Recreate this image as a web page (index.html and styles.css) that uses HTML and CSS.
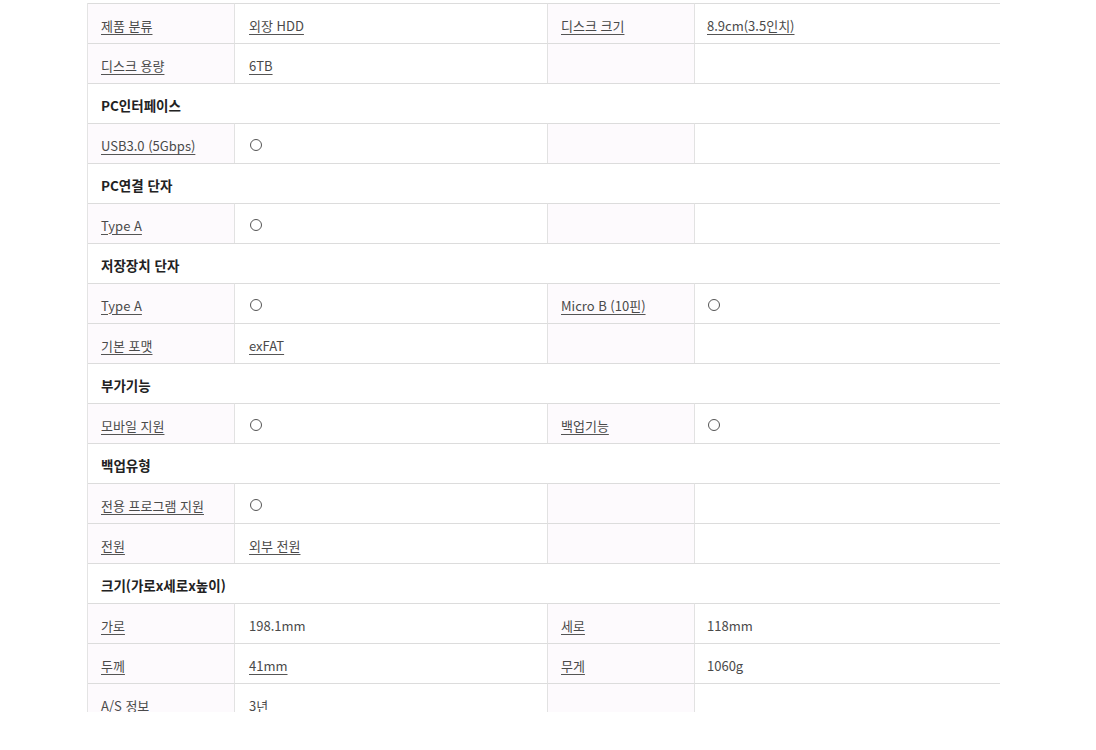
FILE: index.html
```html
<!DOCTYPE html>
<html lang="ko">
<head>
<meta charset="utf-8">
<link rel="stylesheet" href="styles.css">
</head>
<body>
<div class="sheet">
  <div class="spec">
    <div class="c lab"><u>제품 분류</u></div><div class="c val"><u>외장 HDD</u></div><div class="c lab lab2"><u>디스크 크기</u></div><div class="c val val2"><u>8.9cm(3.5인치)</u></div>
    <div class="c lab"><u>디스크 용량</u></div><div class="c val"><u>6TB</u></div><div class="c lab lab2"></div><div class="c val val2"></div>
    <div class="c sec">PC인터페이스</div>
    <div class="c lab"><u>USB3.0 (5Gbps)</u></div><div class="c val"><span class="dot"></span></div><div class="c lab lab2"></div><div class="c val val2"></div>
    <div class="c sec">PC연결 단자</div>
    <div class="c lab"><u>Type A</u></div><div class="c val"><span class="dot"></span></div><div class="c lab lab2"></div><div class="c val val2"></div>
    <div class="c sec">저장장치 단자</div>
    <div class="c lab"><u>Type A</u></div><div class="c val"><span class="dot"></span></div><div class="c lab lab2"><u>Micro B (10핀)</u></div><div class="c val val2"><span class="dot"></span></div>
    <div class="c lab"><u>기본 포맷</u></div><div class="c val"><u>exFAT</u></div><div class="c lab lab2"></div><div class="c val val2"></div>
    <div class="c sec">부가기능</div>
    <div class="c lab"><u>모바일 지원</u></div><div class="c val"><span class="dot"></span></div><div class="c lab lab2"><u>백업기능</u></div><div class="c val val2"><span class="dot"></span></div>
    <div class="c sec">백업유형</div>
    <div class="c lab"><u>전용 프로그램 지원</u></div><div class="c val"><span class="dot"></span></div><div class="c lab lab2"></div><div class="c val val2"></div>
    <div class="c lab"><u>전원</u></div><div class="c val"><u>외부 전원</u></div><div class="c lab lab2"></div><div class="c val val2"></div>
    <div class="c sec">크기(가로x세로x높이)</div>
    <div class="c lab"><u>가로</u></div><div class="c val">198.1mm</div><div class="c lab lab2"><u>세로</u></div><div class="c val val2">118mm</div>
    <div class="c lab"><u>두께</u></div><div class="c val"><u>41mm</u></div><div class="c lab lab2"><u>무게</u></div><div class="c val val2">1060g</div>
    <div class="c lab">A/S 정보</div><div class="c val">3년</div><div class="c lab lab2"></div><div class="c val val2"></div>
  </div>
</div>
</body>
</html>
```

FILE: styles.css
```css
html, body {
  margin: 0;
  padding: 0;
  background: #ffffff;
}
body {
  font-family: "Noto Sans CJK KR", "Noto Sans", sans-serif;
  font-size: 13px;
  color: #4a4a4a;
}
.sheet {
  margin: 3px 0 0 87px;
  width: 913px;
  height: 709px;
  overflow: hidden;
  border-left: 1px solid #e4e4e4;
  box-sizing: border-box;
}
.spec {
  display: grid;
  grid-template-columns: 146px 313px 147px 306px;
  grid-auto-rows: 40px;
}
.c {
  box-sizing: border-box;
  border-top: 1px solid #dcdcdc;
  display: flex;
  align-items: center;
  padding: 3px 0 0 13px;
  white-space: nowrap;
}
.c u {
  text-decoration-color: #555;
  text-underline-offset: 3px;
}
.lab {
  background: #fdfafd;
}
.lab2 {
  border-left: 1px solid #e2e2e2;
}
.val {
  background: #fff;
  border-left: 1px solid #e2e2e2;
  padding-left: 14px;
}
.val2 {
  padding-left: 12px;
}
.sec {
  grid-column: 1 / -1;
  background: #fff;
  font-weight: 700;
  font-size: 13.5px;
  color: #222;
  padding-top: 2px;
}
.dot {
  display: inline-block;
  width: 10px;
  height: 10px;
  border: 1px solid #555;
  border-radius: 50%;
  margin-left: 1px;
}
```
